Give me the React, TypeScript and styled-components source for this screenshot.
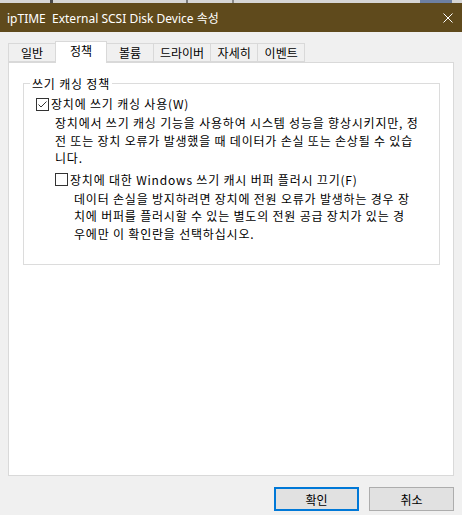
import styled, { createGlobalStyle } from "styled-components";

const GlobalStyle = createGlobalStyle`
  html, body {
    margin: 0;
    padding: 0;
    background: #f0f0f0;
  }
  body {
    font-family: "Noto Sans CJK KR", "Noto Sans", sans-serif;
    font-size: 12px;
    color: #000;
  }
  * {
    box-sizing: border-box;
  }
`;

const Window = styled.div`
  width: 462px;
  height: 515px;
  display: flex;
  flex-direction: column;
  background: #f0f0f0;
  overflow: hidden;
`;

// a sliver of whatever sits behind the dialog
const DesktopEdge = styled.div`
  height: 3px;
  flex: none;
  background: linear-gradient(
    to right,
    #d6d6d6 0 50px,
    #4a4a4a 50px 53px,
    #d6d6d6 53px 186px,
    #7a7a7a 186px 188px,
    #d6d6d6 188px 232px,
    #8a8a8a 232px 234px,
    #d6d6d6 234px 420px,
    #6d80a2 420px 452px,
    #d6d6d6 452px
  );
`;

const TitleBar = styled.div`
  height: 29px;
  flex: none;
  display: flex;
  align-items: center;
  justify-content: space-between;
  padding: 0 9px 0 7px;
  background: #5f4a1c;
  color: #fff;
`;

const Title = styled.span`
  font-family: "Noto Sans", "Noto Sans CJK KR", sans-serif;
  font-size: 12px;
  white-space: pre;
`;

const CloseIcon = () => (
  <svg width="10" height="10" viewBox="0 0 10 10">
    <path d="M0.5 0.5 L9.5 9.5 M9.5 0.5 L0.5 9.5" stroke="#fff" strokeWidth="1" />
  </svg>
);

const Body = styled.div`
  flex: 1;
  display: flex;
  flex-direction: column;
  padding: 9px 8px 0;
`;

const TabRow = styled.div`
  display: flex;
  align-items: flex-end;
  height: 21px;
`;

const Tab = styled.div<{ $active?: boolean }>`
  position: relative;
  display: flex;
  align-items: center;
  justify-content: center;
  height: ${(p) => (p.$active ? "22px" : "19px")};
  min-width: ${(p) => (p.$active ? "52px" : "48px")};
  padding: ${(p) => (p.$active ? "0 6px 4px" : "0 6px")};
  margin: ${(p) => (p.$active ? "0 -1px -1px 0" : "0 -1px 0 0")};
  border: 1px solid #d9d9d9;
  border-bottom: ${(p) => (p.$active ? "none" : "1px solid #d9d9d9")};
  background: ${(p) => (p.$active ? "#fff" : "#f0f0f0")};
  z-index: ${(p) => (p.$active ? 1 : 0)};
  line-height: 1;
  white-space: nowrap;
`;

const Panel = styled.div`
  height: 414px;
  flex: none;
  border: 1px solid #d9d9d9;
  background: #fff;
  padding: 12px 13px 0 14px;
`;

const Group = styled.fieldset`
  margin: 0;
  min-width: 0;
  border: 1px solid #dcdcdc;
  padding: 0 12px 22px 6px;
  letter-spacing: 0.8px;
`;

const Legend = styled.legend`
  padding: 0 2px;
  line-height: 17px;
`;

const Options = styled.div`
  display: flex;
  flex-direction: column;
  padding-left: 6px;
  padding-top: 3px;
`;

const CheckRow = styled.label<{ $indent?: number }>`
  display: flex;
  align-items: center;
  gap: 2px;
  line-height: 18px;
  margin-left: ${(p) => p.$indent ?? 0}px;
  margin-top: ${(p) => (p.$indent ? "4px" : "0")};
`;

const Box = styled.span`
  width: 13px;
  height: 13px;
  flex: none;
  display: flex;
  border: 1px solid #333;
  background: #fff;
`;

const Note = styled.p<{ $indent: number }>`
  margin: 1px 0 0 ${(p) => p.$indent}px;
  line-height: 17.5px;
  white-space: nowrap;
`;

const CheckBox = ({ checked }: { checked?: boolean }) => (
  <Box>
    {checked && (
      <svg width="11" height="11" viewBox="0 0 11 11">
        <path d="M1.5 5.5 L4 8 L9.5 2.5" fill="none" stroke="#333" strokeWidth="1" />
      </svg>
    )}
  </Box>
);

const ButtonRow = styled.div`
  display: flex;
  justify-content: flex-end;
  gap: 10px;
  margin-top: 11px;
  padding-right: 0;
`;

const Button = styled.button<{ $primary?: boolean }>`
  width: 85px;
  height: 24px;
  padding: 0;
  font: inherit;
  color: #000;
  background: #e1e1e1;
  border: ${(p) => (p.$primary ? "2px solid #0078d7" : "1px solid #adadad")};
`;

const tabs = ["일반", "정책", "볼륨", "드라이버", "자세히", "이벤트"];

export default function App() {
  return (
    <>
      <GlobalStyle />
      <Window>
        <DesktopEdge />
        <TitleBar>
          <Title>{"ipTIME  External SCSI Disk Device 속성"}</Title>
          <CloseIcon />
        </TitleBar>
        <Body>
          <TabRow>
            {tabs.map((t) => (
              <Tab key={t} $active={t === "정책"}>
                {t}
              </Tab>
            ))}
          </TabRow>
          <Panel>
            <Group>
              <Legend>쓰기 캐싱 정책</Legend>
              <Options>
                <CheckRow>
                  <CheckBox checked />
                  장치에 쓰기 캐싱 사용(W)
                </CheckRow>
                <Note $indent={19}>
                  장치에서 쓰기 캐싱 기능을 사용하여 시스템 성능을 향상시키지만, 정
                  <br />
                  전 또는 장치 오류가 발생했을 때 데이터가 손실 또는 손상될 수 있습
                  <br />
                  니다.
                </Note>
                <CheckRow $indent={19}>
                  <CheckBox />
                  장치에 대한 Windows 쓰기 캐시 버퍼 플러시 끄기(F)
                </CheckRow>
                <Note $indent={38}>
                  데이터 손실을 방지하려면 장치에 전원 오류가 발생하는 경우 장
                  <br />
                  치에 버퍼를 플러시할 수 있는 별도의 전원 공급 장치가 있는 경
                  <br />
                  우에만 이 확인란을 선택하십시오.
                </Note>
              </Options>
            </Group>
          </Panel>
          <ButtonRow>
            <Button $primary>확인</Button>
            <Button>취소</Button>
          </ButtonRow>
        </Body>
      </Window>
    </>
  );
}
